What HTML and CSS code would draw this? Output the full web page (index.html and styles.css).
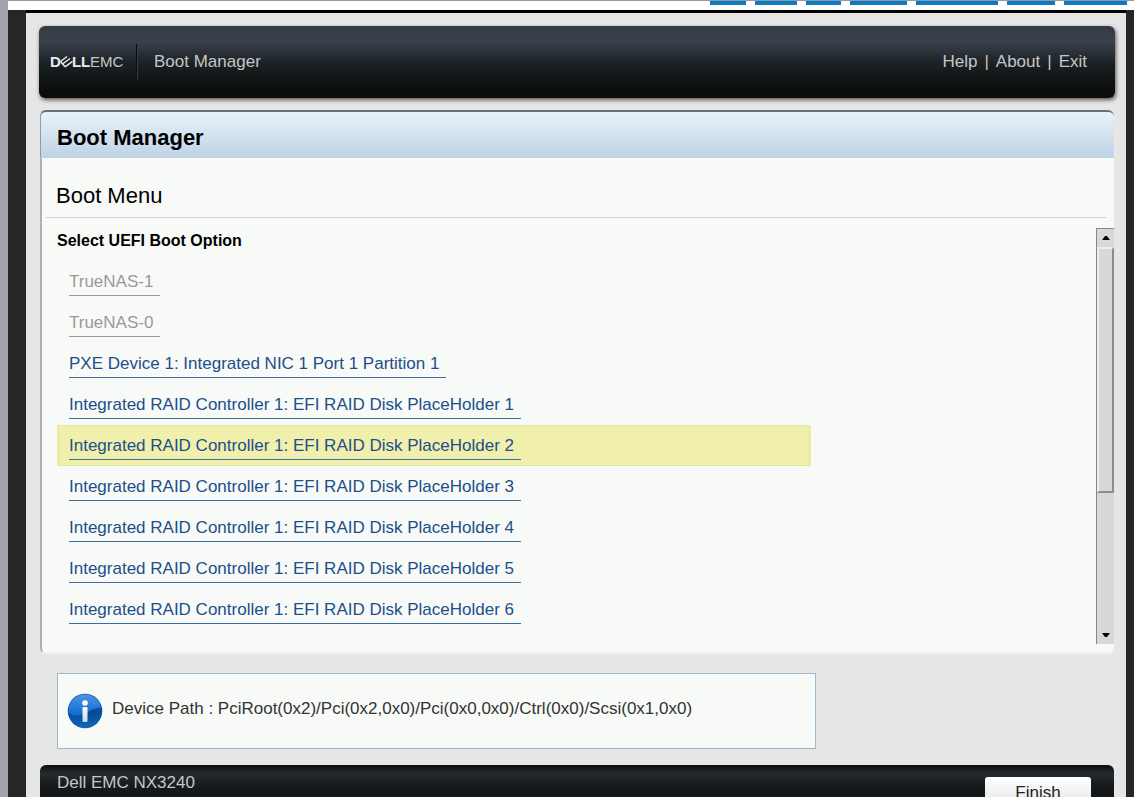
FILE: index.html
```html
<!DOCTYPE html>
<html lang="en">
  <head>
    <meta charset="UTF-8" />
    <meta name="viewport" content="width=device-width, initial-scale=1.0" />
    <title>Boot Manager</title>
    <link rel="stylesheet" href="styles.css">
  </head>
  <body>
    <!-- bottom edge of the console toolbar -->
    <div class="toolbar">
      <span class="tool w36"></span>
      <span class="tool w42"></span>
      <span class="tool w35"></span>
      <span class="tool w57"></span>
      <span class="tool w82"></span>
      <span class="tool w48"></span>
      <span class="tool w63"></span>
    </div>

    <div class="screen">
      <header class="top">
        <svg class="logo" width="76" height="16" viewBox="0 0 76 16" role="img" aria-label="Dell EMC">
          <g class="logo-dell">
            <text x="0" y="13">D</text>
            <text x="22" y="13">L</text>
            <text x="31" y="13">L</text>
          </g>
          <!-- slanted bars between D and L -->
          <g class="logo-bars">
            <path d="M10.500 7.500L17 2.500" />
            <path d="M12.500 10L20 4.500" />
            <path d="M15 12.800L22.500 7.300" />
            <path d="M10.500 7.500L15 12.800" />
          </g>
          <text class="logo-emc" x="40" y="13">EMC</text>
        </svg>
        <span class="divider"></span>
        <span class="app">Boot Manager</span>
        <nav class="links">
          <a href="#">Help</a><span>|</span><a href="#">About</a><span>|</span><a href="#">Exit</a>
        </nav>
      </header>

      <main class="panel">
        <h1>Boot Manager</h1>
        <h2>Boot Menu</h2>
        <div class="content">
          <section class="options">
            <h3>Select UEFI Boot Option</h3>
            <ul>
              <li class="off"><a>TrueNAS-1</a></li>
              <li class="off"><a>TrueNAS-0</a></li>
              <li><a href="#">PXE Device 1: Integrated NIC 1 Port 1 Partition 1</a></li>
              <li><a href="#">Integrated RAID Controller 1: EFI RAID Disk PlaceHolder 1</a></li>
              <li class="valgt"><a href="#">Integrated RAID Controller 1: EFI RAID Disk PlaceHolder 2</a></li>
              <li><a href="#">Integrated RAID Controller 1: EFI RAID Disk PlaceHolder 3</a></li>
              <li><a href="#">Integrated RAID Controller 1: EFI RAID Disk PlaceHolder 4</a></li>
              <li><a href="#">Integrated RAID Controller 1: EFI RAID Disk PlaceHolder 5</a></li>
              <li><a href="#">Integrated RAID Controller 1: EFI RAID Disk PlaceHolder 6</a></li>
            </ul>
          </section>
          <div class="scroll">
            <button class="arrow" aria-label="Scroll up"><svg width="8" height="4" viewBox="0 0 8 4"><path d="M0 4L3 0h2l3 4z" /></svg></button>
            <div class="track"><div class="thumb"></div></div>
            <button class="arrow" aria-label="Scroll down"><svg width="8" height="4" viewBox="0 0 8 4"><path d="M0 0L3 4h2l3-4z" /></svg></button>
          </div>
        </div>
      </main>

      <aside class="info">
        <svg width="36" height="36" viewBox="0 0 36 36" aria-hidden="true">
          <defs>
            <linearGradient id="ball" x1="0" y1="0" x2="0" y2="1">
              <stop offset="0" stop-color="#1f66bd" />
              <stop offset="0.55" stop-color="#044a97" />
              <stop offset="1" stop-color="#0f68c0" />
            </linearGradient>
            <linearGradient id="shine" x1="0" y1="0" x2="0" y2="1">
              <stop offset="0" stop-color="#4d94e4" />
              <stop offset="1" stop-color="#0f6bd0" />
            </linearGradient>
            <linearGradient id="stem" x1="0" y1="0" x2="0" y2="1">
              <stop offset="0" stop-color="#ffffff" />
              <stop offset="1" stop-color="#c9d6e4" />
            </linearGradient>
          </defs>
          <circle cx="18" cy="18" r="17.3" fill="url(#ball)" />
          <path d="M1.5 20A16.5 16.5 0 0 1 34 14.5C27 15 24 17 19 20C13 23.500 7 23.500 1.500 20z" fill="url(#shine)" />
          <circle cx="18" cy="10" r="2.8" fill="#fff" />
          <rect x="15.500" y="14" width="5" height="15" rx="1" fill="url(#stem)" />
        </svg>
        <p>Device Path : PciRoot(0x2)/Pci(0x2,0x0)/Pci(0x0,0x0)/Ctrl(0x0)/Scsi(0x1,0x0)</p>
      </aside>

      <footer class="bottom">
        <span>Dell EMC NX3240</span>
        <button class="finish">Finish</button>
      </footer>
    </div>
  </body>
</html>
```

FILE: styles.css
```css
* {
  box-sizing: border-box;
}

body {
  margin: 0;
  height: 100vh;
  overflow: hidden;
  border-left: 8px solid #a2a5ae;
  background-color: #262626;
  font-family: "Liberation Sans", Arial, sans-serif;
  font-size: 17px;
  line-height: 20px;
}

h1, h2, h3, p, ul {
  margin: 0;
  padding: 0;
}

a {
  color: inherit;
  text-decoration: none;
}

/* toolbar */
.toolbar {
  display: flex;
  justify-content: flex-end;
  gap: 9px;
  height: 10px;
  padding-right: 7px;
  border-top: 1px solid #999;
  background-color: #fff;
}

.tool {
  height: 4px;
  background-color: #0a7bc4;
}

.w35 { width: 35px; }
.w36 { width: 36px; }
.w42 { width: 42px; }
.w48 { width: 48px; }
.w57 { width: 57px; }
.w63 { width: 63px; }
.w82 { width: 82px; }

.screen {
  margin: 0 8px 0 18px;
  padding: 13px 12px 0 14px;
  border-top: 3px solid #000;
  background-color: #e6e6e6;
}

/* header */
.top {
  display: flex;
  align-items: center;
  height: 72px;
  margin: 0 -1px;
  padding: 0 28px 0 11px;
  border-radius: 6px;
  background: linear-gradient(#353b42, #39404a 22%, #2d343b 34%, #1b2124 52%, #0f1413 75%, #0b0b0b);
  box-shadow: 1px 2px 4px #555;
  color: #c4c6c8;
}

.logo text {
  fill: #e8eaec;
  font-size: 15px;
}

.logo .logo-dell text {
  font-weight: bold;
}

.logo-bars {
  fill: none;
  stroke: #e8eaec;
  stroke-width: 1.5;
}

.logo .logo-emc {
  fill: #c4c6c8;
}

.divider {
  width: 2px;
  height: 36px;
  margin: 0 16px 0 10px;
  background: linear-gradient(90deg, #0b0d0f 50%, #343b41 50%);
}

.links {
  display: flex;
  gap: 7px;
  margin-left: auto;
}

/* main panel */
.panel {
  margin-top: 12px;
  height: 544px;
  border-left: 2px solid #a9b1b9;
  border-bottom: 2px solid #f1f2f1;
  border-radius: 6px;
  background-color: #f8faf8;
}

h1 {
  height: 48px;
  margin-left: -2px;
  padding-left: 16px;
  border-top: 2px solid #65727d;
  border-left: 1px solid #8c9cab;
  border-bottom: 1px solid #c6d0da;
  border-radius: 6px 6px 0 0;
  background: linear-gradient(#e6f1fa, #dbe8f3 35%, #bfd3e5);
  font-size: 22px;
  line-height: 52px;
}

h2 {
  height: 60px;
  margin: 0 8px 0 4px;
  padding-left: 10px;
  border-bottom: 1px solid #cfd1cf;
  font-size: 22px;
  font-weight: normal;
  line-height: 75px;
}

.content {
  display: flex;
  justify-content: space-between;
  padding: 10px 0 0 15px;
}

.options {
  flex: 1;
  max-width: 754px;
}

h3 {
  height: 33px;
  font-size: 16px;
  line-height: 25px;
}

ul {
  list-style: none;
}

li {
  height: 41px;
  padding: 11px 11px 0;
  border: 1px solid transparent;
  border-width: 0 1px;
  color: #1c4f8a;
}

li a {
  display: inline-block;
  padding: 0 7px 3px 0;
  border-bottom: 1px solid #3f6d9f;
}

.off {
  color: #999;
}

.off a {
  border-color: #999;
}

.valgt {
  background-color: #f0f0ac;
  box-shadow: inset 0 0 0 1px #e3e6a2;
}

/* scrollbar */
.scroll {
  display: flex;
  flex-direction: column;
  width: 18px;
  height: 416px;
  border-top: 1px solid #888;
  border-left: 1px solid #888;
  background-color: #d7d9d7;
}

.arrow {
  display: flex;
  align-items: center;
  justify-content: center;
  height: 18px;
  padding: 0;
  border: none;
  background: none;
}

.track {
  flex: 1;
}

.thumb {
  height: 65%;
  border: 2px solid #8b8d8b;
  border-top-color: #eceeec;
  border-left-color: #eceeec;
}

/* device path */
.info {
  display: flex;
  align-items: center;
  gap: 9px;
  max-width: 759px;
  height: 76px;
  margin: 19px 0 0 17px;
  padding-left: 9px;
  border: 1px solid #9bb9ce;
  background-color: #f8faf8;
  color: #333;
}

.info p {
  padding-bottom: 4px;
}

/* footer */
.bottom {
  display: flex;
  justify-content: space-between;
  height: 72px;
  margin-top: 16px;
  padding: 8px 23px 0 17px;
  border-radius: 6px 6px 0 0;
  background: linear-gradient(#0b0d0f, #262b2e 12%, #15191b 30%, #0b0b0b);
  color: #c4c6c8;
}

.finish {
  width: 106px;
  height: 32px;
  margin-top: 4px;
  border: none;
  border-radius: 3px;
  background: linear-gradient(#fff, #e2e4e4);
  color: #222;
  font-family: inherit;
  font-size: 17px;
}
```
